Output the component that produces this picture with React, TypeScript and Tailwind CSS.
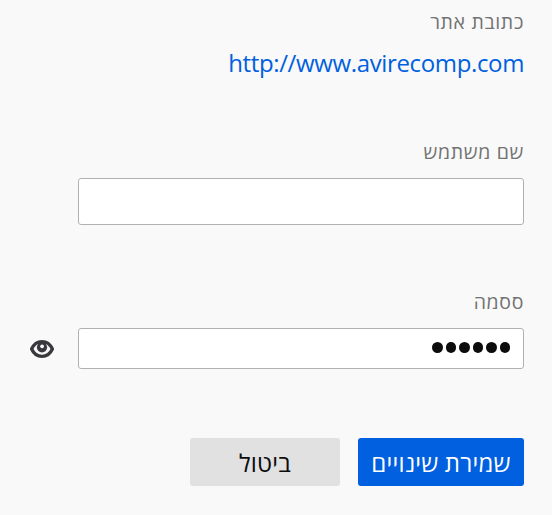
const passwordDots = [0, 1, 2, 3, 4, 5];

function EyeIcon() {
  return (
    <svg width="26" height="20" viewBox="0 0 26 20" fill="none" aria-hidden="true">
      <path
        d="M2.6 10C4.8 5.2 8.6 2.6 13 2.6S21.2 5.2 23.4 10C21.2 14.8 17.4 17.4 13 17.4S4.8 14.8 2.6 10Z"
        stroke="#38383d"
        strokeWidth="3.3"
        strokeLinejoin="round"
      />
      <circle cx="13" cy="8.3" r="5.1" fill="#38383d" />
      <circle cx="13.1" cy="7.3" r="1.9" fill="#f9f9fa" />
    </svg>
  );
}

export default function App() {
  return (
    <div
      dir="rtl"
      className="h-[515px] w-[552px] overflow-hidden bg-[#f9f9f9] px-7 font-['Open_Sans','Noto_Sans',sans-serif] text-[#0c0c0d]"
    >
      <div className="flex h-[42px] items-center pt-px text-[19.5px] tracking-[0.65px] whitespace-nowrap text-[#737373]">
        <span>כתובת אתר</span>
      </div>
      <div className="flex h-[43px] items-center pb-[2px] text-[24px] tracking-[-0.36px] whitespace-nowrap text-[#0060df]">
        <a dir="ltr">http://www.avirecomp.com</a>
      </div>

      <label className="mt-[46px] flex h-[42px] items-center text-[19.5px] tracking-[0.65px] whitespace-nowrap text-[#737373]">
        <span>שם משתמש</span>
      </label>
      <div className="mt-[5px] h-[47px] w-[446px] rounded-[3px] border border-[#b1b1b1] bg-white" />

      <label className="mt-[56px] flex h-[42px] items-center text-[19.5px] tracking-[0.65px] whitespace-nowrap text-[#737373]">
        <span>ססמה</span>
      </label>
      <div className="mt-[5px] flex items-center gap-[23px]">
        <div className="flex h-[41px] w-[446px] items-center gap-[3px] rounded-[3px] border border-[#b1b1b1] bg-white px-[13px] pb-[2px]">
          {passwordDots.map((dot) => (
            <span key={dot} className="size-[10.5px] rounded-full bg-[#0c0c0d]" />
          ))}
        </div>
        <EyeIcon />
      </div>

      <div className="mt-[69px] flex gap-[18px] text-[24px] whitespace-nowrap">
        <button className="flex h-12 w-[166px] items-center justify-center rounded-[3px] bg-[#0060df] pt-[2px] tracking-[0.2px] text-white">
          <span>שמירת שינויים</span>
        </button>
        <button className="flex h-12 w-[150px] items-center justify-center rounded-[3px] bg-[#e1e1e1] pt-[2px] tracking-[0.2px]">
          <span>ביטול</span>
        </button>
      </div>
    </div>
  );
}
